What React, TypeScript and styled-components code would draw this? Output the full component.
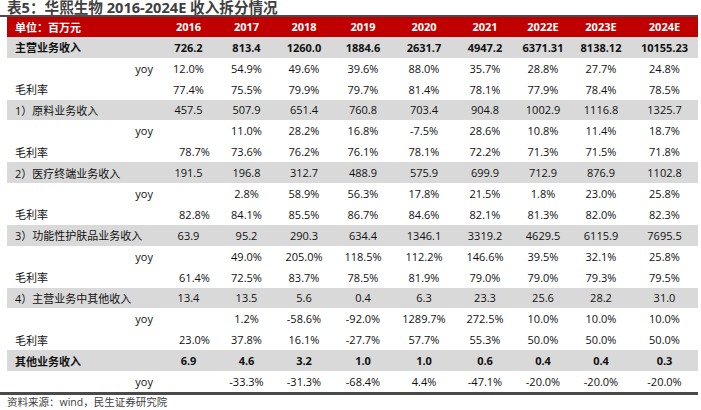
import React from "react";
import styled, { createGlobalStyle } from "styled-components";

const GlobalStyle = createGlobalStyle`
  html, body {
    margin: 0;
    padding: 0;
    background: #ffffff;
  }
  body {
    font-family: "Open Sans", "Noto Sans CJK SC", sans-serif;
  }
`;

const COLS = "152px 59px 57px 58px 60px 62px 60px 56px 60px 67px";

const Page = styled.div`
  width: 701px;
  height: 410px;
  overflow: hidden;
  background: #fff;
  display: flex;
  flex-direction: column;
`;

const Title = styled.div`
  width: 691px;
  height: 15px;
  padding-left: 7px;
  border-bottom: 2px solid #4a4a4a;
  display: flex;
  align-items: center;
  font-family: "Open Sans", "Noto Sans CJK SC", sans-serif;
  font-weight: 700;
  font-size: 14.6px;
  line-height: 1;
  color: #3f3f3f;
  white-space: nowrap;
`;

const Table = styled.div`
  margin-left: 7px;
  width: 691px;
  display: flex;
  flex-direction: column;
`;

const HeaderRow = styled.div`
  display: grid;
  grid-template-columns: ${COLS};
  height: 20px;
  background: #c00000;
  color: #ffffff;
  font-weight: 700;
  font-size: 11px;
  align-items: center;
`;

const Row = styled.div<{ $shade?: boolean; $bold?: boolean }>`
  display: grid;
  grid-template-columns: ${COLS};
  height: 20.9px;
  background: ${(p) => (p.$shade ? "#d9d9d9" : "transparent")};
  font-weight: ${(p) => (p.$bold ? 700 : 400)};
  font-size: 11px;
  color: #111;
  align-items: center;
`;

const Label = styled.div<{ $right?: boolean }>`
  text-align: ${(p) => (p.$right ? "right" : "left")};
  padding: ${(p) => (p.$right ? "0 6px 0 0" : "0 0 0 8px")};
  white-space: nowrap;
`;

const Value = styled.div<{ $shift?: number }>`
  text-align: center;
  white-space: nowrap;
  padding-left: ${(p) => (p.$shift ? `${p.$shift * 2}px` : "0")};
`;

const Footer = styled.div`
  width: 698px;
  border-top: 3px solid #4a4a4a;
  padding-left: 7px;
  box-sizing: border-box;
  font-size: 10.5px;
  line-height: 15px;
  color: #404040;
  white-space: nowrap;
`;

type RowData = {
  label: string;
  kind: "main" | "sub" | "yoy" | "gm";
  values: string[];
  shiftFirst?: boolean;
};

const years = ["2016", "2017", "2018", "2019", "2020", "2021", "2022E", "2023E", "2024E"];

const rows: RowData[] = [
  { label: "主营业务收入", kind: "main", values: ["726.2", "813.4", "1260.0", "1884.6", "2631.7", "4947.2", "6371.31", "8138.12", "10155.23"] },
  { label: "yoy", kind: "yoy", values: ["12.0%", "54.9%", "49.6%", "39.6%", "88.0%", "35.7%", "28.8%", "27.7%", "24.8%"] },
  { label: "毛利率", kind: "gm", values: ["77.4%", "75.5%", "79.9%", "79.7%", "81.4%", "78.1%", "77.9%", "78.4%", "78.5%"] },
  { label: "1）原料业务收入", kind: "sub", values: ["457.5", "507.9", "651.4", "760.8", "703.4", "904.8", "1002.9", "1116.8", "1325.7"] },
  { label: "yoy", kind: "yoy", values: ["", "11.0%", "28.2%", "16.8%", "-7.5%", "28.6%", "10.8%", "11.4%", "18.7%"] },
  { label: "毛利率", kind: "gm", shiftFirst: true, values: ["78.7%", "73.6%", "76.2%", "76.1%", "78.1%", "72.2%", "71.3%", "71.5%", "71.8%"] },
  { label: "2）医疗终端业务收入", kind: "sub", values: ["191.5", "196.8", "312.7", "488.9", "575.9", "699.9", "712.9", "876.9", "1102.8"] },
  { label: "yoy", kind: "yoy", values: ["", "2.8%", "58.9%", "56.3%", "17.8%", "21.5%", "1.8%", "23.0%", "25.8%"] },
  { label: "毛利率", kind: "gm", shiftFirst: true, values: ["82.8%", "84.1%", "85.5%", "86.7%", "84.6%", "82.1%", "81.3%", "82.0%", "82.3%"] },
  { label: "3）功能性护肤品业务收入", kind: "sub", values: ["63.9", "95.2", "290.3", "634.4", "1346.1", "3319.2", "4629.5", "6115.9", "7695.5"] },
  { label: "yoy", kind: "yoy", values: ["", "49.0%", "205.0%", "118.5%", "112.2%", "146.6%", "39.5%", "32.1%", "25.8%"] },
  { label: "毛利率", kind: "gm", shiftFirst: true, values: ["61.4%", "72.5%", "83.7%", "78.5%", "81.9%", "79.0%", "79.0%", "79.3%", "79.5%"] },
  { label: "4）主营业务中其他收入", kind: "sub", values: ["13.4", "13.5", "5.6", "0.4", "6.3", "23.3", "25.6", "28.2", "31.0"] },
  { label: "yoy", kind: "yoy", values: ["", "1.2%", "-58.6%", "-92.0%", "1289.7%", "272.5%", "10.0%", "10.0%", "10.0%"] },
  { label: "毛利率", kind: "gm", shiftFirst: true, values: ["23.0%", "37.8%", "16.1%", "-27.7%", "57.7%", "55.3%", "50.0%", "50.0%", "50.0%"] },
  { label: "其他业务收入", kind: "main", values: ["6.9", "4.6", "3.2", "1.0", "1.0", "0.6", "0.4", "0.4", "0.3"] },
  { label: "yoy", kind: "yoy", values: ["", "-33.3%", "-31.3%", "-68.4%", "4.4%", "-47.1%", "-20.0%", "-20.0%", "-20.0%"] },
];

export default function App() {
  return (
    <>
      <GlobalStyle />
      <Page>
        <Title>表5：华熙生物 2016-2024E 收入拆分情况</Title>
        <Table>
          <HeaderRow>
            <Label>单位：百万元</Label>
            {years.map((y) => (
              <Value key={y}>{y}</Value>
            ))}
          </HeaderRow>
          {rows.map((r, i) => (
            <Row key={i} $shade={r.kind === "main" || r.kind === "sub"} $bold={r.kind === "main"}>
              <Label $right={r.kind === "yoy"}>{r.label}</Label>
              {r.values.map((v, j) => (
                <Value key={j} $shift={r.shiftFirst && j === 0 ? 6 : 0}>
                  {v}
                </Value>
              ))}
            </Row>
          ))}
        </Table>
        <Footer>资料来源：wind，民生证券研究院</Footer>
      </Page>
    </>
  );
}
